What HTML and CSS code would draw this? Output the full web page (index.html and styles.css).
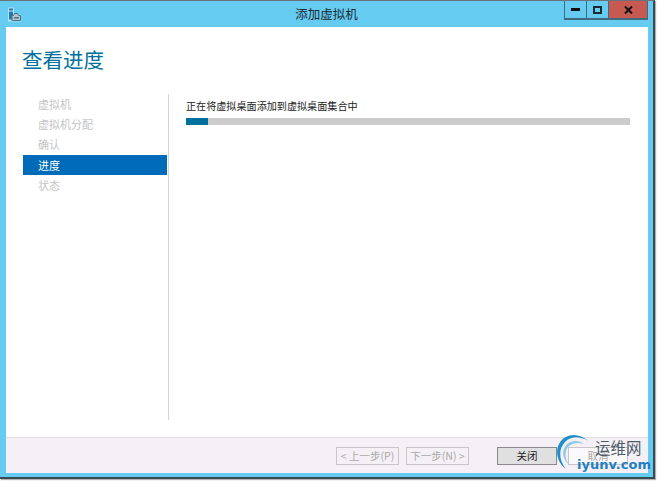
FILE: index.html
```html
<!DOCTYPE html>
<html lang="zh-CN">
<head>
<meta charset="utf-8">
<title>添加虚拟机</title>
<link rel="stylesheet" href="styles.css">
</head>
<body>
<div class="window">
  <header class="titlebar">
    <svg class="app-icon" width="15" height="15" viewBox="0 0 15 15">
      <path d="M1 0.500h6v7h7v7H1z" fill="#cfe9f8" opacity="0.75"/>
      <rect x="2" y="1.500" width="4" height="11" fill="#1f78b8"/>
      <rect x="2" y="3.500" width="4" height="1" fill="#d8eefa"/>
      <path d="M5 8.500h1.500l1-2h3l1 2H13.500v5H5z" fill="#b9c6cf" stroke="#4f6f86"/>
      <rect x="7" y="10" width="5" height="1.500" fill="#4f6f86"/>
    </svg>
    <div class="title">添加虚拟机</div>
    <div class="controls">
      <div class="ctl">
        <svg width="9" height="3" viewBox="0 0 9 3"><rect width="9" height="3" fill="#111"/></svg>
      </div>
      <div class="ctl">
        <svg width="9" height="8" viewBox="0 0 9 8"><rect x="1" y="1" width="7" height="6" fill="none" stroke="#1a2a33" stroke-width="2"/></svg>
      </div>
      <div class="ctl close">
        <svg width="9" height="8" viewBox="0 0 9 8"><path d="M1 0.500l7 7M8 0.500l-7 7" stroke="#111" stroke-width="2" fill="none"/></svg>
      </div>
    </div>
  </header>
  <div class="client">
    <main class="content">
      <h1 class="heading">查看进度</h1>
      <div class="columns">
        <nav class="steps">
          <div class="step">虚拟机</div>
          <div class="step">虚拟机分配</div>
          <div class="step">确认</div>
          <div class="step active">进度</div>
          <div class="step">状态</div>
        </nav>
        <section class="pane">
          <div class="status">正在将虚拟桌面添加到虚拟桌面集合中</div>
          <div class="progress"><div class="bar" style="width:5%"></div></div>
        </section>
      </div>
    </main>
    <footer class="footer">
      <button class="btn" disabled>&lt; 上一步(P)</button>
      <button class="btn next" disabled>下一步(N) &gt;</button>
      <button class="btn primary">关闭</button>
      <button class="btn cancel" disabled>取消</button>
    </footer>
  </div>
</div>
<div class="watermark">
  <svg class="swirl" width="34" height="38" viewBox="0 0 34 38">
    <path d="M11 36C0 28 -1 13 9 5C16 0 26 1 33 8C25 3 16 3 10 9C3 16 4 28 11 36Z" fill="#1f8fc8"/>
    <path d="M15 33C7 26 6 17 12 11C17 7 24 7 29 11C23 9 17 10 13 14C9 19 10 27 15 33Z" fill="#8ccbe8"/>
  </svg>
  <span class="wm-cn">运维网</span>
  <span class="wm-en">iyunv.com</span>
</div>
</body>
</html>
```
FILE: styles.css
```css
* { box-sizing: border-box; }
html, body { margin: 0; padding: 0; }
body {
  width: 658px;
  height: 481px;
  background: #fff;
  overflow: hidden;
  position: relative;
  font-family: "Noto Sans CJK SC", "Liberation Sans", sans-serif;
}
.window {
  width: 655px;
  height: 479px;
  background: #65cbf1;
  border-top: 1px solid #6b7278;
  border-right: 2px solid #3a4a52;
  border-bottom: 2px solid #3a4a52;
  box-shadow: 1px 1px 1px #b0b0b0;
  display: flex;
  flex-direction: column;
}
.titlebar {
  height: 26px;
  flex: none;
  display: flex;
  position: relative;
  padding-left: 7px;
}
.app-icon { margin-top: 6px; }
.title {
  position: absolute;
  left: 0;
  right: 0;
  top: 5px;
  text-align: center;
  font-size: 12.500px;
  line-height: 16px;
  color: #1c2a30;
}
.controls {
  position: absolute;
  right: 5px;
  top: 0;
  display: flex;
  height: 19px;
  border: 1px solid #3f6a80;
  border-top: 0;
  border-bottom-width: 2px;
}
.ctl {
  width: 22px;
  display: flex;
  align-items: center;
  justify-content: center;
  border-right: 1px solid #3f6a80;
}
.close {
  width: 38px;
  background: #c75a50;
  border-right: 0;
}
.client {
  flex: 1;
  margin: 0 5px 4px 6px;
  background: #fff;
  display: flex;
  flex-direction: column;
}
.content {
  flex: 1;
  display: flex;
  flex-direction: column;
  padding: 19px 17px 0;
  min-height: 0;
}
.heading {
  margin: 0 0 0 -1px;
  font-size: 20.500px;
  line-height: 26px;
  font-weight: 400;
  color: #00709c;
}
.columns {
  display: flex;
  margin-top: 22px;
  height: 326px;
}
.steps {
  width: 146px;
  border-right: 1px solid #cfd4d6;
  margin-right: 17px;
  flex: none;
}
.step {
  height: 20.200px;
  line-height: 20px;
  font-size: 11px;
  padding-left: 15px;
  margin-right: 1px;
  color: #c4c4c4;
}
.step.active {
  background: #006bb8;
  color: #fff;
}
.pane {
  flex: 1;
  padding: 4px 1px 0 0;
}
.status {
  font-size: 10.100px;
  line-height: 15px;
  color: #222;
}
.progress {
  height: 7px;
  margin-top: 5px;
  background: #cccccc;
}
.bar {
  height: 100%;
  background: #00709c;
}
.footer {
  height: 36px;
  flex: none;
  background: #f5f0f5;
  border-top: 1px solid #e0dde0;
  display: flex;
  align-items: flex-start;
  padding: 9px 0 0 330px;
}
.btn {
  height: 18px;
  width: 63px;
  padding: 0;
  font-family: inherit;
  font-size: 10.500px;
  line-height: 14px;
  background: #f5f0f5;
  border: 1px solid #c6c6c6;
  color: #a8a8a8;
}
.next { margin-left: 7px; }
.primary {
  margin-left: 28px;
  width: 60px;
  background: #e0e0e0;
  border-color: #8a8a8a;
  color: #222;
}
.cancel {
  margin-left: 11px;
  width: 60px;
  background: #fbf9fb;
}
.watermark {
  position: absolute;
  left: 555px;
  top: 433px;
  width: 103px;
  height: 48px;
}
.swirl { position: absolute; left: 0; top: 0; }
.wm-cn {
  position: absolute;
  left: 40px;
  top: 4px;
  font-size: 15.500px;
  line-height: 20px;
  color: #4a5a66;
}
.wm-en {
  position: absolute;
  left: 22px;
  top: 24px;
  font-family: "DejaVu Sans", sans-serif;
  font-weight: 700;
  font-size: 13px;
  line-height: 16px;
  color: #1f7fc4;
}
```
